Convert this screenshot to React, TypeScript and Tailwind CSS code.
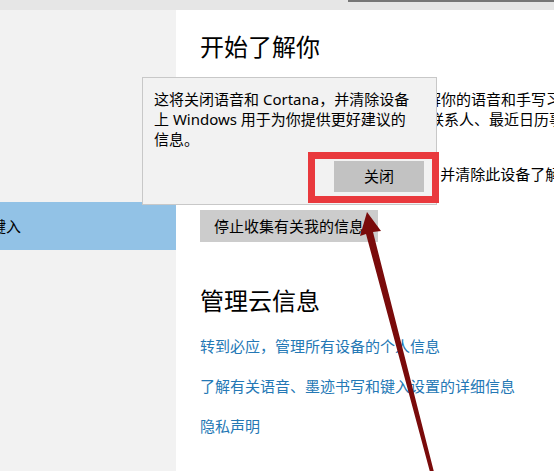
import React from "react";

const font = "font-['Noto_Sans','Noto_Sans_CJK_SC',sans-serif]";

const links = [
  "转到必应，管理所有设备的个人信息",
  "了解有关语音、墨迹书写和键入设置的详细信息",
  "隐私声明",
];

export default function App() {
  return (
    <div className={`relative w-[554px] h-[471px] overflow-hidden bg-white text-black ${font}`}>
      {/* title bar strip */}
      <div className="h-[10px] bg-[#e6e6e6] flex justify-end">
        <div className="w-[206px] h-[2px] bg-[#777777]" />
      </div>

      <div className="flex h-[461px]">
        {/* sidebar */}
        <div className="w-[176px] shrink-0 bg-[#f2f2f2] pt-[192px] overflow-hidden">
          <div className="h-[48px] bg-[#92c2e6] flex items-center text-[15px] whitespace-nowrap">
            <span className="ml-[-9px]">键入</span>
          </div>
        </div>

        {/* main content */}
        <div className="flex-1 pl-[24px] whitespace-nowrap">
          <h1 className="mt-[21px] text-[24px] leading-[32px] font-normal">开始了解你</h1>
          <p className="mt-[26px] ml-[4px] text-[15px] leading-[20px]">
            Windows 和 Cortana 可以通过了解你的语音和手写习惯，为你
            <br />
            提供更好的建议。我们会收集你的联系人、最近日历事件等信息。
          </p>
          <p className="mt-[35px] text-[15px] leading-[20px]">
            关闭它会同时关闭听写和 Cortana，并清除此设备了解的有关你的信息。
          </p>
          <button className="mt-[26px] h-[32px] w-[178px] bg-[#cccccc] text-[15px] text-left pl-[14px]">
            停止收集有关我的信息
          </button>

          <h2 className="mt-[43px] text-[24px] leading-[32px] font-normal">管理云信息</h2>
          <div className="mt-[19px] flex flex-col gap-[20px]">
            {links.map((l) => (
              <a key={l} className="text-[15px] leading-[20px] text-[#2478b5]">
                {l}
              </a>
            ))}
          </div>
        </div>
      </div>

      {/* flyout dialog */}
      <div className="absolute left-[142px] top-[77px] w-[295px] h-[128px] bg-[#f2f2f2] border border-[#c8c8c8] flex flex-col">
        <p className="pt-[11px] pl-[11px] text-[15px] leading-[20px] whitespace-nowrap">
          这将关闭语音和 Cortana，并清除设备
          <br />
          上 Windows 用于为你提供更好建议的
          <br />
          信息。
        </p>
        <div className="mt-[12px] flex justify-end pr-[12px]">
          <button className="w-[90px] h-[31px] bg-[#c2c2c2] text-[15px]">关闭</button>
        </div>
      </div>

      {/* red highlight */}
      <div className="absolute left-[308px] top-[152px] w-[131px] h-[51px] border-[7px] border-[#e9393d]" />

      {/* arrow */}
      <svg className="absolute left-0 top-0 pointer-events-none" width="554" height="471" viewBox="0 0 554 471">
        <polygon points="367,212 360,236 366,234 430,472 434,472 373,232 381,231" fill="#7a0b0b" />
      </svg>
    </div>
  );
}
